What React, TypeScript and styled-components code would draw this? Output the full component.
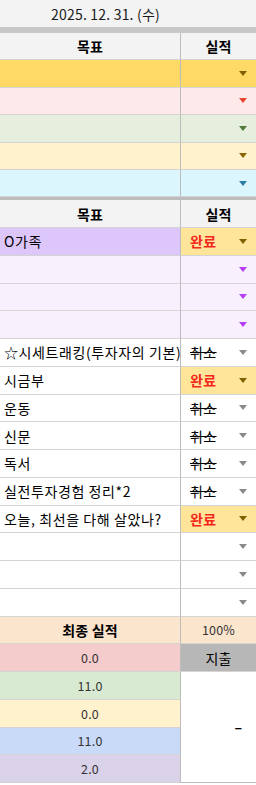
import React from "react";
import styled, { createGlobalStyle } from "styled-components";

const GlobalStyle = createGlobalStyle`
  html, body {
    margin: 0;
    padding: 0;
    background: #ffffff;
  }
  body {
    font-family: "Noto Sans CJK KR", "Noto Sans", sans-serif;
    color: #000;
  }
`;

const palette = {
  grid: "#d4d4d4",
  divider: "#bcbcbc",
  header: "#f3f3f3",
  done: "#ffe599",
  doneText: "#f4271d",
};

const Page = styled.div`
  width: 256px;
  overflow: hidden;
`;

const DateBar = styled.div`
  height: 27px;
  background: ${palette.header};
  border-bottom: 6px solid #c7c7c7;
  display: flex;
  align-items: center;
  padding-left: 51px;
  font-size: 14px;
  letter-spacing: 0.2px;
  color: #1a1a1a;
`;

const Grid = styled.div<{ $rowH: number; $thick?: boolean }>`
  display: grid;
  grid-template-columns: 181px 75px;
  grid-auto-rows: ${(p) => p.$rowH}px;
  border-bottom: ${(p) => (p.$thick ? `3px solid ${palette.divider}` : "none")};
`;

const Cell = styled.div<{
  $bg?: string;
  $center?: boolean;
  $bold?: boolean;
  $left?: boolean;
}>`
  box-sizing: border-box;
  background: ${(p) => p.$bg || "#fff"};
  border-bottom: 1px solid ${palette.grid};
  border-right: ${(p) => (p.$left ? `1px solid ${palette.divider}` : "none")};
  display: flex;
  align-items: center;
  justify-content: ${(p) => (p.$center ? "center" : "flex-start")};
  padding: 0 ${(p) => (p.$center ? "0" : "4px")};
  font-size: 14px;
  font-weight: ${(p) => (p.$bold ? 700 : 400)};
  white-space: nowrap;
  overflow: hidden;
  letter-spacing: ${(p) => (p.$center ? "0.2px" : "0.6px")};
`;

const Status = styled.div<{ $bg?: string }>`
  box-sizing: border-box;
  background: ${(p) => p.$bg || "#fff"};
  border-bottom: 1px solid ${palette.grid};
  display: flex;
  align-items: center;
  justify-content: space-between;
  padding: 0 9px 0 9px;
  font-size: 14px;
`;

const Label = styled.span<{ $kind: "done" | "cancel" }>`
  font-weight: ${(p) => (p.$kind === "done" ? 700 : 400)};
  color: ${(p) => (p.$kind === "done" ? palette.doneText : "#000")};
  text-decoration: ${(p) => (p.$kind === "cancel" ? "line-through" : "none")};
  letter-spacing: 0.4px;
`;

const Caret = styled.span<{ $color: string }>`
  width: 0;
  height: 0;
  margin-left: auto;
  border-left: 4px solid transparent;
  border-right: 4px solid transparent;
  border-top: 5px solid ${(p) => p.$color};
`;

const SmallText = styled.span`
  font-size: 12.5px;
  color: #333;
`;

const Merged = styled.div`
  box-sizing: border-box;
  grid-column: 2;
  grid-row: span 4;
  background: #fff;
  border-bottom: 1px solid ${palette.divider};
  display: flex;
  align-items: center;
  justify-content: flex-end;
  padding-right: 14px;
  font-size: 14px;
  font-weight: 700;
`;

const ScoreCell = styled(Cell)`
  grid-column: 1;
`;

type StatusKind = "done" | "cancel" | "";

const goals1 = [
  { bg: "#ffd966", caret: "#7f6000" },
  { bg: "#fde9ea", caret: "#e8432f" },
  { bg: "#e6efdd", caret: "#4f7a3a" },
  { bg: "#fff2cc", caret: "#8a6400" },
  { bg: "#dcf6fd", caret: "#2d7ea6" },
];

const goals2: { text: string; bg?: string; status: StatusKind; caret: string }[] = [
  { text: "O가족", bg: "#dcc6fa", status: "done", caret: "#7f6000" },
  { text: "", bg: "#f8f0fd", status: "", caret: "#b43ef0" },
  { text: "", bg: "#f8f0fd", status: "", caret: "#b43ef0" },
  { text: "", bg: "#f8f0fd", status: "", caret: "#b43ef0" },
  { text: "☆시세트래킹(투자자의 기본)", status: "cancel", caret: "#8a8a8a" },
  { text: "시금부", status: "done", caret: "#7f6000" },
  { text: "운동", status: "cancel", caret: "#8a8a8a" },
  { text: "신문", status: "cancel", caret: "#8a8a8a" },
  { text: "독서", status: "cancel", caret: "#8a8a8a" },
  { text: "실전투자경험 정리*2", status: "cancel", caret: "#8a8a8a" },
  { text: "오늘, 최선을 다해 살았나?", status: "done", caret: "#7f6000" },
  { text: "", status: "", caret: "#8a8a8a" },
  { text: "", status: "", caret: "#8a8a8a" },
  { text: "", status: "", caret: "#8a8a8a" },
];

const scores = [
  { value: "11.0", bg: "#d9ead3" },
  { value: "0.0", bg: "#fff2cc" },
  { value: "11.0", bg: "#c9daf8" },
  { value: "2.0", bg: "#d9d2e9" },
];

const HeaderRow = () => (
  <>
    <Cell $bg={palette.header} $center $bold $left>
      목표
    </Cell>
    <Cell $bg={palette.header} $center $bold>
      실적
    </Cell>
  </>
);

const App: React.FC = () => {
  return (
    <Page>
      <GlobalStyle />
      <DateBar>2025. 12. 31. (수)</DateBar>
      <Grid $rowH={27.4} $thick>
        <HeaderRow />
        {goals1.map((g, i) => (
          <React.Fragment key={i}>
            <Cell $bg={g.bg} $left />
            <Status $bg={g.bg}>
              <Caret $color={g.caret} />
            </Status>
          </React.Fragment>
        ))}
      </Grid>
      <Grid $rowH={27.75}>
        <HeaderRow />
        {goals2.map((g, i) => (
          <React.Fragment key={i}>
            <Cell $bg={g.bg} $left>
              {g.text}
            </Cell>
            <Status $bg={g.status === "done" ? palette.done : g.bg}>
              {g.status === "done" && <Label $kind="done">완료</Label>}
              {g.status === "cancel" && <Label $kind="cancel">취소</Label>}
              <Caret $color={g.caret} />
            </Status>
          </React.Fragment>
        ))}
        <Cell $bg="#fce5cd" $center $bold $left>
          최종 실적
        </Cell>
        <Cell $bg="#fce5cd" $center>
          <SmallText>100%</SmallText>
        </Cell>
        <Cell $bg="#f4cccc" $center $left>
          <SmallText>0.0</SmallText>
        </Cell>
        <Cell $bg="#b7b7b7" $center>
          지출
        </Cell>
        {scores.map((s, i) => (
          <React.Fragment key={i}>
            <ScoreCell $bg={s.bg} $center $left>
              <SmallText>{s.value}</SmallText>
            </ScoreCell>
            {i === 0 && <Merged>–</Merged>}
          </React.Fragment>
        ))}
      </Grid>
    </Page>
  );
};

export default App;
